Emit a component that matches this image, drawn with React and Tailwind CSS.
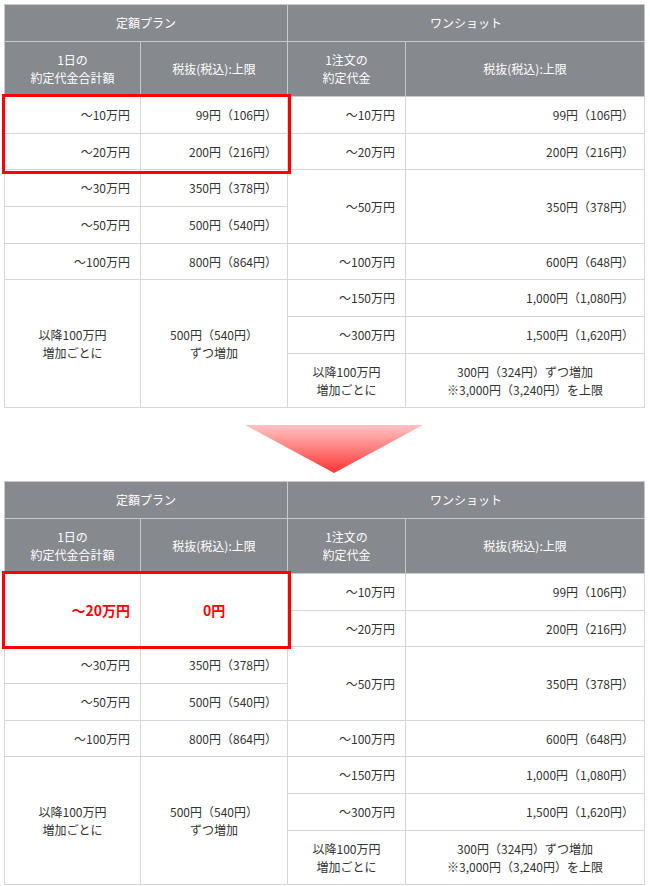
const FONT = '"Noto Sans CJK JP", "Noto Sans", sans-serif'

function Th({ children, colSpan, className = '' }) {
  return (
    <th
      colSpan={colSpan}
      className={`border border-[#c9c9c9] bg-[#86898e] text-center align-middle text-[12px] font-normal leading-[18px] text-white ${className}`}
    >
      {children}
    </th>
  )
}

function Td({ children, rowSpan, center, className = '' }) {
  return (
    <td
      rowSpan={rowSpan}
      className={`border border-[#d6d6d6] align-middle text-[12px] leading-[18px] text-[#333] ${center ? 'text-center' : 'pr-[10px] text-right'} ${className}`}
    >
      {children}
    </td>
  )
}

function FeeTable({ changed }) {
  return (
    <div className="relative">
      <table className="w-[640px] table-fixed border-collapse border border-[#c9c9c9] bg-white">
        <colgroup>
          <col className="w-[136px]" />
          <col className="w-[147px]" />
          <col className="w-[118px]" />
          <col className="w-[239px]" />
        </colgroup>
        <thead>
          <tr className="h-[37px]">
            <Th colSpan={2}>定額プラン</Th>
            <Th colSpan={2}>ワンショット</Th>
          </tr>
          <tr className="h-[55px]">
            <Th>
              1日の
              <br />
              約定代金合計額
            </Th>
            <Th>税抜(税込):上限</Th>
            <Th>
              1注文の
              <br />
              約定代金
            </Th>
            <Th>税抜(税込):上限</Th>
          </tr>
        </thead>
        <tbody>
          <tr className="h-[37px]">
            {changed ? (
              <>
                <Td rowSpan={2} className="text-[14px] font-bold text-[#ff0000]">～20万円</Td>
                <Td rowSpan={2} center className="text-[14px] font-bold text-[#ff0000]">0円</Td>
              </>
            ) : (
              <>
                <Td>～10万円</Td>
                <Td>99円（106円）</Td>
              </>
            )}
            <Td>～10万円</Td>
            <Td>99円（106円）</Td>
          </tr>
          <tr className="h-[36px]">
            {!changed && (
              <>
                <Td>～20万円</Td>
                <Td>200円（216円）</Td>
              </>
            )}
            <Td>～20万円</Td>
            <Td>200円（216円）</Td>
          </tr>
          <tr className="h-[37px]">
            <Td>～30万円</Td>
            <Td>350円（378円）</Td>
            <Td rowSpan={2}>～50万円</Td>
            <Td rowSpan={2}>350円（378円）</Td>
          </tr>
          <tr className="h-[37px]">
            <Td>～50万円</Td>
            <Td>500円（540円）</Td>
          </tr>
          <tr className="h-[36px]">
            <Td>～100万円</Td>
            <Td>800円（864円）</Td>
            <Td>～100万円</Td>
            <Td>600円（648円）</Td>
          </tr>
          <tr className="h-[37px]">
            <Td rowSpan={3} center>
              以降100万円
              <br />
              増加ごとに
            </Td>
            <Td rowSpan={3} center>
              500円（540円）
              <br />
              ずつ増加
            </Td>
            <Td>～150万円</Td>
            <Td>1,000円（1,080円）</Td>
          </tr>
          <tr className="h-[37px]">
            <Td>～300万円</Td>
            <Td>1,500円（1,620円）</Td>
          </tr>
          <tr className="h-[54px]">
            <Td center>
              以降100万円
              <br />
              増加ごとに
            </Td>
            <Td center>
              300円（324円）ずつ増加
              <br />
              ※3,000円（3,240円）を上限
            </Td>
          </tr>
        </tbody>
      </table>
      {/* red highlight frame */}
      <div
        className={`pointer-events-none absolute left-[-2px] top-[90px] w-[289px] border-[3px] border-[#ff0000] ${changed ? 'h-[78px]' : 'h-[80px]'}`}
      />
    </div>
  )
}

function DownArrow() {
  return (
    <svg width="178" height="48" viewBox="0 0 178 48" className="block">
      <defs>
        <linearGradient id="arrowGrad" x1="0" y1="0" x2="0" y2="1">
          <stop offset="0" stopColor="#ffc4c4" />
          <stop offset="1" stopColor="#ff3434" />
        </linearGradient>
      </defs>
      <polygon points="0,0 178,0 89,48" fill="url(#arrowGrad)" />
    </svg>
  )
}

export default function App() {
  return (
    <div className="min-h-[886px] w-[650px] bg-white pl-[4px] pt-[4px]" style={{ fontFamily: FONT }}>
      <FeeTable />
      <div className="flex justify-start pl-[241px] pt-[17px] pb-[8px]">
        <DownArrow />
      </div>
      <FeeTable changed />
    </div>
  )
}
